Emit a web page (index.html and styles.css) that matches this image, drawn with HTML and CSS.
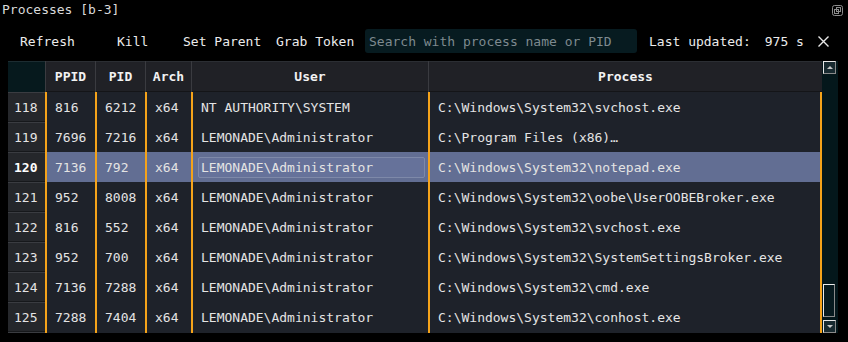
FILE: index.html
```html
<!DOCTYPE html>
<html lang="en">

<head>
    <meta charset="UTF-8">
    <title>Processes [b-3]</title>
    <link rel="stylesheet" href="styles.css">
</head>

<body>
    <div class="window">
        <div class="titlebar">
            <span class="title">Processes [b-3]</span>
            <svg class="undock" width="11" height="11" viewBox="0 0 11 11" fill="none" stroke="#8c8c8c" stroke-width="1">
                <rect x="0.5" y="0.5" width="10" height="10" rx="2"/>
                <rect x="4.5" y="2.5" width="4" height="4"/>
                <rect x="2.5" y="4.5" width="4" height="4"/>
            </svg>
        </div>

        <div class="toolbar">
            <button class="tool-btn">Refresh</button>
            <button class="tool-btn">Kill</button>
            <button class="tool-btn">Set Parent</button>
            <button class="tool-btn">Grab Token</button>
            <input class="search" type="text" placeholder="Search with process name or PID">
            <span class="updated">Last updated:<span class="secs">975 s</span></span>
            <svg class="close" width="11" height="11" viewBox="0 0 11 11" stroke="#e8e8e8" stroke-width="1.4">
                <path d="M0.5 0.5 L10.5 10.5 M10.5 0.5 L0.5 10.5"/>
            </svg>
        </div>

        <div class="table-area">
            <div class="grid">
                <div class="row head">
                    <div class="cell num"></div>
                    <div class="cell">PPID</div>
                    <div class="cell">PID</div>
                    <div class="cell">Arch</div>
                    <div class="cell">User</div>
                    <div class="cell">Process</div>
                </div>
                <div id="rows"></div>
                <div class="row filler">
                    <div class="cell num"></div>
                    <div class="cell"></div>
                    <div class="cell"></div>
                    <div class="cell"></div>
                    <div class="cell"></div>
                    <div class="cell"></div>
                </div>
            </div>
            <div class="scrollbar">
                <div class="sb-btn"><span class="tri up"></span></div>
                <div class="sb-track"><div class="sb-thumb"></div></div>
                <div class="sb-btn"><span class="tri down"></span></div>
            </div>
        </div>
    </div>

    <script>
        const procs = [
            [118, 816, 6212, 'x64', 'NT AUTHORITY\\SYSTEM', 'C:\\Windows\\System32\\svchost.exe'],
            [119, 7696, 7216, 'x64', 'LEMONADE\\Administrator', 'C:\\Program Files (x86)…'],
            [120, 7136, 792, 'x64', 'LEMONADE\\Administrator', 'C:\\Windows\\System32\\notepad.exe'],
            [121, 952, 8008, 'x64', 'LEMONADE\\Administrator', 'C:\\Windows\\System32\\oobe\\UserOOBEBroker.exe'],
            [122, 816, 552, 'x64', 'LEMONADE\\Administrator', 'C:\\Windows\\System32\\svchost.exe'],
            [123, 952, 700, 'x64', 'LEMONADE\\Administrator', 'C:\\Windows\\System32\\SystemSettingsBroker.exe'],
            [124, 7136, 7288, 'x64', 'LEMONADE\\Administrator', 'C:\\Windows\\System32\\cmd.exe'],
            [125, 7288, 7404, 'x64', 'LEMONADE\\Administrator', 'C:\\Windows\\System32\\conhost.exe']
        ];

        const rows = document.getElementById('rows');

        procs.forEach(p => {
            const row = document.createElement('div');
            row.className = 'row' + (p[0] === 120 ? ' selected' : '');

            p.forEach((value, i) => {
                const cell = document.createElement('div');
                cell.className = 'cell' + (i === 0 ? ' num' : '');
                if (p[0] === 120 && i === 4) {
                    // focused cell gets an outline box
                    const box = document.createElement('span');
                    box.className = 'focus';
                    box.textContent = value;
                    cell.appendChild(box);
                } else {
                    cell.textContent = value;
                }
                row.appendChild(cell);
            });

            rows.appendChild(row);
        });
    </script>
</body>

</html>
```

FILE: styles.css
```css
:root {
    --orange: #f5a31a;
    --cell-bg: #1e222a;
    --head-bg: #202126;
    --num-bg: #25272b;
    --teal-dark: #04171b;
    --text: #e4e4e4;
}

body {
    margin: 0;
    background: #000;
    font-family: 'DejaVu Sans Mono', 'Liberation Mono', monospace;
    font-size: 13px;
    color: var(--text);
    width: 848px;
    height: 342px;
    overflow: hidden;
}

.titlebar {
    height: 20px;
    display: flex;
    align-items: center;
    justify-content: space-between;
    padding: 0 5px 0 2px;
}

.title {
    color: #dadada;
    line-height: 20px;
}

.undock {
    display: block;
}

.toolbar {
    display: grid;
    grid-template-columns: 97px 66px 93px 89px 272px auto 1fr;
    align-items: center;
    padding: 9px 20px 8px 20px;
    height: 24px;
}

.tool-btn {
    background: none;
    border: none;
    padding: 0;
    font: inherit;
    color: #ececec;
    text-align: left;
    cursor: pointer;
}

.search {
    height: 24px;
    box-sizing: border-box;
    background: #071b20;
    border: none;
    border-radius: 3px;
    padding: 0 4px;
    font: inherit;
    color: var(--text);
    outline: none;
}

.search::placeholder {
    color: #7e8a8f;
}

.updated {
    margin-left: 12px;
    color: #ececec;
}

.secs {
    margin-left: 14px;
}

.close {
    justify-self: end;
    margin-right: -1px;
}

.table-area {
    display: flex;
    margin-left: 8px;
    height: 272px;
    overflow: hidden;
}

.grid {
    width: 814px;
}

.row {
    display: grid;
    grid-template-columns: 37px 50px 50px 46px 237px 394px;
    height: 30px;
    background: var(--cell-bg);
}

.cell {
    display: flex;
    align-items: center;
    padding-left: 8px;
    border-left: 2px solid var(--orange);
    white-space: nowrap;
    overflow: hidden;
}

.cell:last-child {
    border-right: 2px solid var(--orange);
}

.cell.num {
    border-left: none;
    padding-left: 6px;
    background: var(--num-bg);
    box-shadow: inset 0 1px 0 #3a3c41, inset 0 -1px 0 #16181b;
}

.row.selected {
    background: #626e93;
}

.row.selected .cell.num {
    font-weight: bold;
    color: #fff;
}

.focus {
    display: block;
    margin-left: -3px;
    padding: 0 2px;
    width: 221px;
    height: 19px;
    line-height: 19px;
    border: 1px solid #7e89a9;
    border-radius: 2px;
    background: #66729a;
}

.row.head {
    height: 31px;
    background: var(--head-bg);
    box-shadow: inset 0 1px 0 #2b2e33, inset 0 -1px 0 #141518;
}

.head .cell {
    justify-content: center;
    padding-left: 0;
    font-weight: bold;
    color: #f2f2f2;
    border-left: 1px solid #3a3b40;
}

.head .cell:last-child {
    border-right: none;
}

.head .cell.num {
    border-left: none;
    background: #06191d;
    box-shadow: inset 0 1px 0 #1c2c31;
}

.scrollbar {
    width: 16px;
    background: var(--teal-dark);
    display: flex;
    flex-direction: column;
    padding-left: 1px;
    box-sizing: border-box;
}

.sb-btn {
    width: 13px;
    height: 13px;
    box-sizing: border-box;
    border: 1px solid #e6e6e6;
    border-right-color: #8a8a8a;
    border-bottom-color: #8a8a8a;
    background: #182a30;
    display: flex;
    align-items: center;
    justify-content: center;
}

.tri {
    width: 0;
    height: 0;
    border-left: 3px solid transparent;
    border-right: 3px solid transparent;
}

.tri.up {
    border-bottom: 3px solid #c8c8c8;
}

.tri.down {
    border-top: 3px solid #c8c8c8;
}

.sb-track {
    flex: 1;
    display: flex;
    flex-direction: column;
    justify-content: flex-end;
    padding-bottom: 3px;
}

.sb-thumb {
    width: 12px;
    height: 33px;
    box-sizing: border-box;
    border: 1px solid #ececec;
    border-right-color: #8a8a8a;
    border-bottom-color: #8a8a8a;
    background: #071a1f;
}
```
